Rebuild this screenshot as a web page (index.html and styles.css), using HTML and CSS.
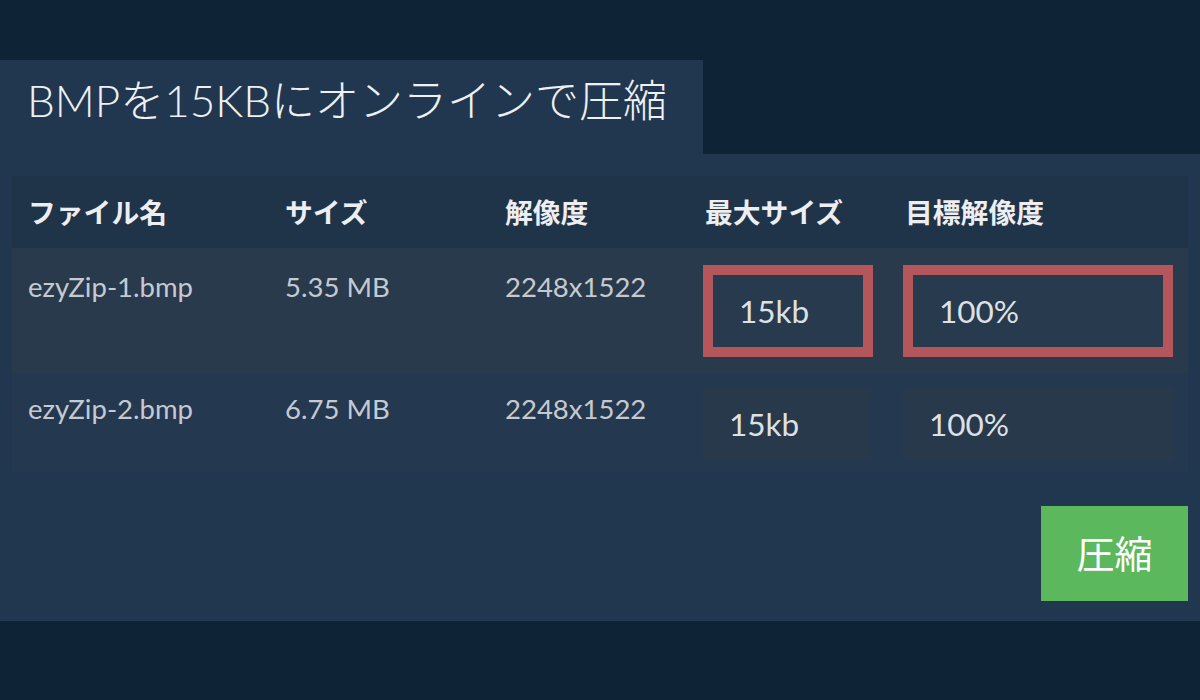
FILE: index.html
```html
<!DOCTYPE html>
<html lang="ja">
<head>
<meta charset="utf-8">
<title>BMPを15KBにオンラインで圧縮</title>
<link rel="stylesheet" href="styles.css">
</head>
<body>
<div class="page">
  <div class="tab"><h1 class="title">BMPを15KBにオンラインで圧縮</h1></div>
  <div class="panel">
    <div class="table">
      <div class="row head">
        <div class="cell">ファイル名</div>
        <div class="cell">サイズ</div>
        <div class="cell">解像度</div>
        <div class="cell">最大サイズ</div>
        <div class="cell">目標解像度</div>
      </div>
      <div class="row r1">
        <div class="cell">ezyZip-1.bmp</div>
        <div class="cell">5.35 MB</div>
        <div class="cell">2248x1522</div>
        <div class="cell"><div class="input hl small">15kb</div></div>
        <div class="cell"><div class="input hl wide">100%</div></div>
      </div>
      <div class="row r2">
        <div class="cell">ezyZip-2.bmp</div>
        <div class="cell">6.75 MB</div>
        <div class="cell">2248x1522</div>
        <div class="cell"><div class="input small">15kb</div></div>
        <div class="cell"><div class="input wide">100%</div></div>
      </div>
    </div>
    <div class="actions"><button class="btn">圧縮</button></div>
  </div>
</div>
</body>
</html>
```
FILE: styles.css
```css
html, body {
  margin: 0;
  padding: 0;
}
body {
  background: #0f2337;
  width: 1200px;
  height: 700px;
  overflow: hidden;
  font-family: "Lato", "Noto Sans CJK JP", sans-serif;
}
.page {
  padding-top: 60px;
}
.tab {
  width: 703px;
  height: 94px;
  background: #213750;
  box-sizing: border-box;
  padding-left: 27px;
  padding-bottom: 14px;
  display: flex;
  align-items: center;
}
.title {
  margin: 0;
  font-weight: 300;
  font-size: 44px;
  line-height: 1.1;
  color: #eef0f2;
  letter-spacing: 0;
}
.panel {
  background: #213750;
  height: 467px;
  box-sizing: border-box;
  padding: 22px 12px 20px 12px;
}
.table {
  display: flex;
  flex-direction: column;
}
.row {
  display: grid;
  grid-template-columns: 257px 220px 198px 200px 1fr;
}
.cell {
  padding-left: 16px;
}
.head {
  background: #1f3349;
  height: 72px;
  align-items: center;
}
.head .cell {
  font-family: "Noto Sans CJK JP", sans-serif;
  font-weight: 700;
  font-size: 27.8px;
  color: #eceef1;
  line-height: 1;
}
.head .cell:nth-child(4),
.head .cell:nth-child(5) {
  padding-left: 18px;
}
.r1 {
  background: #293a4d;
  height: 126px;
  box-sizing: border-box;
  padding-top: 17px;
}
.r2 {
  background: #243850;
  height: 98px;
  box-sizing: border-box;
  padding-top: 14px;
}
.r1 .cell, .r2 .cell {
  font-size: 27.5px;
  color: #c5cad0;
  line-height: 40px;
}
.r1 .cell:nth-child(-n+3) { padding-top: 2px; }
.r2 .cell:nth-child(-n+3) { padding-top: 1px; }
.input {
  box-sizing: border-box;
  height: 72px;
  display: flex;
  align-items: center;
  padding-left: 26px;
  font-size: 31.5px;
  color: #dde1e5;
  background: #28394b;
}
.input.small { width: 167px; }
.input.wide { width: 270px; }
.input.hl {
  height: 92px;
  border: 10px solid #b5565a;
  background: #283a4d;
}
.input.hl.small { width: 170px; }
.actions {
  display: flex;
  justify-content: flex-end;
  margin-top: 34px;
}
.btn {
  width: 147px;
  height: 95px;
  background: #5cb85c;
  border: none;
  color: #ffffff;
  font-family: "Noto Sans CJK JP", sans-serif;
  font-size: 38px;
  font-weight: 400;
  padding: 0 0 4px 0;
}
```
